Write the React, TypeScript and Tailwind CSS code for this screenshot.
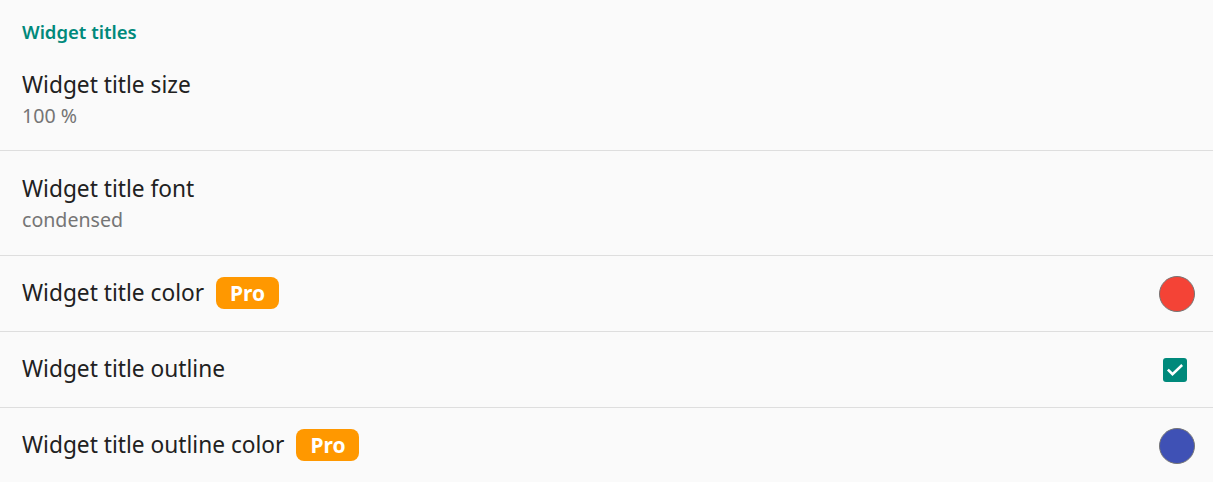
import React from "react";

function Pro() {
  return (
    <span className="ml-[12px] inline-flex h-[32px] w-[63px] items-center justify-center rounded-[8px] bg-[#ff9800] text-[21px] font-bold leading-none text-white [font-family:'Noto_Sans','Open_Sans',sans-serif]">
      Pro
    </span>
  );
}

export default function App() {
  return (
    <div className="h-[482px] w-[1213px] overflow-hidden bg-[#fafafa] text-[#212121] [font-family:'Noto_Sans','Open_Sans',sans-serif]">
      <div className="h-[47px] px-[22px] pt-[20px]">
        <div className="text-[18.5px] font-semibold leading-[24px] text-[#00897b]">Widget titles</div>
      </div>
      <div className="border-b border-[#dedede] px-[22px] pb-[18px] pt-[23px]">
        <div className="text-[22.7px] leading-[30px]">Widget title size</div>
        <div className="text-[19.6px] leading-[32px] text-[#757575]">100 %</div>
      </div>
      <div className="border-b border-[#dedede] px-[22px] pb-[19px] pt-[23px]">
        <div className="text-[22.7px] leading-[30px]">Widget title font</div>
        <div className="text-[19.6px] leading-[32px] text-[#757575]">condensed</div>
      </div>
      <div className="flex h-[76px] items-center justify-between border-b border-[#dedede] pl-[22px] pr-[18px]">
        <div className="flex items-center text-[22.7px]">
          Widget title color
          <Pro />
        </div>
        <div className="h-[36px] w-[36px] rounded-full border border-[#757575] bg-[#f44336]" />
      </div>
      <div className="flex h-[76px] items-center justify-between border-b border-[#dedede] pl-[22px] pr-[26px]">
        <div className="text-[22.7px]">Widget title outline</div>
        <div className="flex h-[24px] w-[24px] items-center justify-center rounded-[3px] bg-[#00897b]">
          <svg width="20" height="20" viewBox="0 0 24 24" fill="none" stroke="white" strokeWidth="3" strokeLinecap="square">
            <path d="M4.5 12.5l4.5 4.5L19.5 7" />
          </svg>
        </div>
      </div>
      <div className="flex h-[75px] items-center justify-between pl-[22px] pr-[18px]">
        <div className="flex items-center text-[22.7px]">
          Widget title outline color
          <Pro />
        </div>
        <div className="h-[36px] w-[36px] rounded-full border border-[#757575] bg-[#3f51b5]" />
      </div>
    </div>
  );
}
